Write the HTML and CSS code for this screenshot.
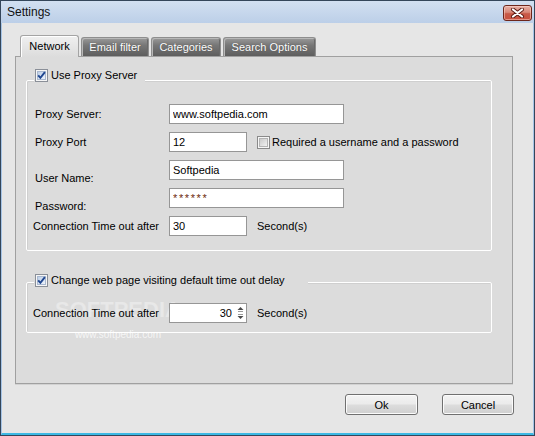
FILE: index.html
```html
<!DOCTYPE html>
<html>
<head>
<meta charset="utf-8">
<title>Settings</title>
<link rel="stylesheet" href="styles.css">
</head>
<body>
<div class="window">
  <div class="titlebar">
    <span class="title">Settings</span>
    <button class="close" aria-label="Close">
      <svg width="15" height="10" viewBox="0 0 15 10"><path d="M3 1.5 L12 8.5 M12 1.5 L3 8.5" stroke="#5a1a12" stroke-width="4" stroke-linecap="round"/><path d="M3 1.5 L12 8.5 M12 1.5 L3 8.5" stroke="#fff" stroke-width="2.2" stroke-linecap="round"/></svg>
    </button>
  </div>
  <div class="client">
    <div class="tabs">
      <div class="tab active t-network">Network</div>
      <div class="tab t-email">Email filter</div>
      <div class="tab t-cat">Categories</div>
      <div class="tab t-search">Search Options</div>
    </div>
    <div class="panel">
      <div class="watermark">
        <span class="wm-big">SOFTPEDIA</span>
        <span class="wm-small">www.softpedia.com</span>
      </div>
      <div class="group g-proxy">
        <div class="legend l-proxy">
          <span class="cb"><svg width="13" height="13" viewBox="0 0 13 13"><defs><linearGradient id="ci" x1="0" y1="0" x2="1" y2="1"><stop offset="0" stop-color="#b9cce6"/><stop offset="1" stop-color="#f2f6fc"/></linearGradient></defs><rect x="0.5" y="0.5" width="12" height="12" fill="#f6f6f6" stroke="#8a8f98"/><rect x="2.5" y="2.5" width="8" height="8" fill="url(#ci)" stroke="#a9b8cf"/><path d="M3.2 6.3 L5.4 8.8 L9.9 3.2" fill="none" stroke="#1f4690" stroke-width="1.9"/></svg></span>
          <span>Use Proxy Server</span>
        </div>
        <div class="form">
          <label class="lbl">Proxy Server:</label>
          <input class="field wide" value="www.softpedia.com">
          <label class="lbl">Proxy Port</label>
          <div class="inline">
            <input class="field short" value="12">
            <span class="cb req"><svg width="13" height="13" viewBox="0 0 13 13"><defs><linearGradient id="cu" x1="0" y1="0" x2="1" y2="1"><stop offset="0" stop-color="#c8c8c8"/><stop offset="1" stop-color="#f4f4f4"/></linearGradient></defs><rect x="0.5" y="0.5" width="12" height="12" fill="#f6f6f6" stroke="#8a8a8a"/><rect x="2.5" y="2.5" width="8" height="8" fill="url(#cu)" stroke="#b4b4b4"/></svg></span>
            <span>Required a username and a password</span>
          </div>
          <label class="lbl drop">User Name:</label>
          <input class="field wide" value="Softpedia">
          <label class="lbl drop">Password:</label>
          <input class="field wide pw" value="******">
          <label class="lbl tight">Connection Time out after</label>
          <div class="inline">
            <input class="field short" value="30">
            <span class="unit">Second(s)</span>
          </div>
        </div>
      </div>
      <div class="group g-delay">
        <div class="legend l-delay">
          <span class="cb"><svg width="13" height="13" viewBox="0 0 13 13"><rect x="0.5" y="0.5" width="12" height="12" fill="#f6f6f6" stroke="#8a8f98"/><rect x="2.5" y="2.5" width="8" height="8" fill="url(#ci)" stroke="#a9b8cf"/><path d="M3.2 6.3 L5.4 8.8 L9.9 3.2" fill="none" stroke="#1f4690" stroke-width="1.9"/></svg></span>
          <span>Change web page visiting default time out delay</span>
        </div>
        <div class="form">
          <label class="lbl tight">Connection Time out after</label>
          <div class="inline">
            <div class="spin">
              <input class="spin-val" value="30">
              <svg class="arrows" width="7" height="14" viewBox="0 0 7 14"><path d="M0.5 4 L3.5 1 L6.5 4Z" fill="#4a4a4a"/><path d="M1 5.5 H6" stroke="#9a9a9a"/><path d="M1 8.5 H6" stroke="#9a9a9a"/><path d="M0.5 10 L3.5 13 L6.5 10Z" fill="#4a4a4a"/></svg>
            </div>
            <span class="unit">Second(s)</span>
          </div>
        </div>
      </div>
    </div>
    <div class="buttons">
      <button class="btn ok">Ok</button>
      <button class="btn cancel">Cancel</button>
    </div>
  </div>
</div>
</body>
</html>
```

FILE: styles.css
```css
html, body {
  margin: 0;
  padding: 0;
  background: #ffffff;
}

body {
  font-family: "Liberation Sans", Arial, sans-serif;
  font-size: 11px;
  color: #000;
}

.window {
  width: 535px;
  height: 436px;
  box-sizing: border-box;
  border: 1px solid #34465a;
  display: flex;
  flex-direction: column;
  background: #e6e6e6;
}

.titlebar {
  height: 22px;
  flex: none;
  display: flex;
  align-items: center;
  justify-content: space-between;
  padding: 0 2px 0 6px;
  background: linear-gradient(#d2e0f1, #bccfe8);
}

.title {
  font-size: 12px;
  color: #111;
}

.close {
  width: 29px;
  height: 16px;
  margin-top: 2px;
  padding: 0;
  border: 1px solid #6d261b;
  border-radius: 3px;
  background: linear-gradient(#e8b0a6 0%, #d88878 45%, #c85a48 55%, #c8503e 100%);
  box-shadow: inset 0 0 0 1px rgba(255, 220, 210, 0.5);
  display: flex;
  align-items: center;
  justify-content: center;
}

.client {
  flex: 1;
  border-left: 1px solid #a6c4e6;
  border-right: 1px solid #a6c4e6;
  border-bottom: 2px solid #3cb9e4;
  padding: 12px 20px 0 13px;
  display: flex;
  flex-direction: column;
}

/* Tabs */
.tabs {
  display: flex;
  align-items: flex-end;
  gap: 2px;
  height: 22px;
  margin-left: 5px;
  margin-bottom: -1px;
}

.tab {
  box-sizing: border-box;
  height: 19px;
  margin-bottom: 1px;
  border: 1px solid #8e8e8e;
  border-bottom: none;
  border-radius: 3px 3px 0 0;
  background: linear-gradient(#9a9a9a 0%, #777 40%, #5e5e5e 100%);
  box-shadow: inset 1px 1px 0 #b8b8b8, inset -1px 0 0 #6a6a6a;
  color: #fff;
  text-shadow: 0 0 1px #444;
  display: flex;
  align-items: center;
  justify-content: center;
  white-space: nowrap;
}

.tab.active {
  height: 22px;
  margin-bottom: 0;
  position: relative;
  z-index: 1;
  border-color: #a4a4a4;
  background: linear-gradient(#f0f0f0, #dcdcdc);
  box-shadow: inset 1px 1px 0 #fff;
  color: #000;
  text-shadow: none;
  padding-bottom: 1px;
}

.t-network { width: 59px; }
.t-email { width: 68px; }
.t-cat { width: 70px; }
.t-search { width: 93px; }

/* Panel */
.panel {
  position: relative;
  box-sizing: border-box;
  width: 498px;
  height: 328px;
  border: 1px solid #a0a0a0;
  background: #dcdcdc;
  padding: 23px 0 0 10px;
  box-shadow: 0 1px 0 #d2d2d2;
}

.group {
  position: relative;
  box-sizing: border-box;
  width: 466px;
  border: 1px solid #ffffff;
  border-radius: 2px;
  box-shadow: inset 1px 1px 0 #cfcfcf;
  display: flex;
  flex-direction: column;
  align-items: flex-start;
}

.g-proxy {
  padding: 0 0 14px 8px;
}

.g-delay {
  margin-top: 31px;
  padding: 0 0 9px 8px;
}

.legend {
  box-sizing: border-box;
  height: 13px;
  margin-left: -1px;
  padding-left: 1px;
  background: #dcdcdc;
  display: flex;
  align-items: center;
  gap: 3px;
  line-height: 13px;
  white-space: nowrap;
}

.l-proxy {
  width: 111px;
  margin-top: -12px;
  margin-bottom: 22px;
}

.l-delay {
  width: 274px;
  margin-top: -9px;
  margin-bottom: 16px;
}

.cb {
  width: 13px;
  height: 13px;
  flex: none;
  display: block;
}

.cb svg {
  display: block;
}

.form {
  display: grid;
  grid-template-columns: 134px auto;
  grid-auto-rows: 20px;
  row-gap: 8px;
  align-items: start;
}

.lbl {
  line-height: 20px;
  white-space: nowrap;
}

.lbl.drop {
  margin-top: 8px;
}

.lbl.tight {
  margin-left: -2px;
}

.field {
  box-sizing: border-box;
  height: 20px;
  margin: 0;
  border: 1px solid #969696;
  background: #fff;
  padding: 0 3px;
  font: inherit;
  color: #000;
  outline: none;
}

.field.wide { width: 175px; }
.field.short { width: 78px; }

.field.pw {
  color: #6e2a0c;
  letter-spacing: 1.6px;
}

.inline {
  display: flex;
  align-items: center;
  height: 20px;
  white-space: nowrap;
}

.req {
  margin-left: 10px;
  margin-right: 2px;
}

.unit {
  margin-left: 10px;
}

.spin {
  box-sizing: border-box;
  width: 78px;
  height: 20px;
  border: 1px solid #969696;
  background: #fff;
  display: flex;
  align-items: center;
  padding-right: 2px;
  gap: 5px;
}

.spin-val {
  flex: 1;
  min-width: 0;
  border: none;
  margin: 0;
  padding: 0;
  font: inherit;
  text-align: right;
  background: transparent;
  outline: none;
}

.arrows {
  display: block;
  flex: none;
}

/* Watermark overlay (faint, behind the controls) */
.watermark {
  position: absolute;
  left: 39px;
  top: 240px;
  display: flex;
  flex-direction: column;
  align-items: center;
  pointer-events: none;
}

.wm-big {
  font-family: "Liberation Sans", Arial, sans-serif;
  font-size: 22px;
  font-weight: bold;
  line-height: 25px;
  color: rgba(255, 255, 255, 0.35);
}

.wm-small {
  margin-top: 7px;
  font-size: 10px;
  color: rgba(255, 255, 255, 0.75);
}

/* Buttons */
.buttons {
  display: flex;
  justify-content: flex-end;
  gap: 24px;
  margin-top: 10px;
  margin-right: -1px;
}

.btn {
  box-sizing: border-box;
  height: 21px;
  padding: 0;
  border: 1px solid #707070;
  border-radius: 3px;
  background: linear-gradient(#f3f3f3 0%, #ebebeb 48%, #dddddd 52%, #cfcfcf 100%);
  box-shadow: inset 0 0 0 1px #fbfbfb;
  font: inherit;
  color: #000;
}

.btn.ok { width: 73px; }
.btn.cancel { width: 72px; }
```
